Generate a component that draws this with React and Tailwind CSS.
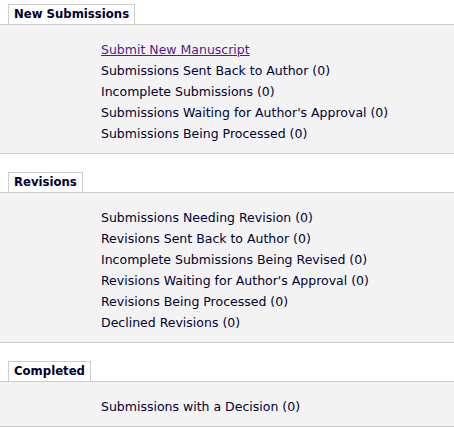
import React from "react";

const sections = [
  {
    title: "New Submissions",
    items: [
      { text: "Submit New Manuscript", link: true },
      { text: "Submissions Sent Back to Author (0)" },
      { text: "Incomplete Submissions (0)" },
      { text: "Submissions Waiting for Author's Approval (0)" },
      { text: "Submissions Being Processed (0)" },
    ],
  },
  {
    title: "Revisions",
    items: [
      { text: "Submissions Needing Revision (0)" },
      { text: "Revisions Sent Back to Author (0)" },
      { text: "Incomplete Submissions Being Revised (0)" },
      { text: "Revisions Waiting for Author's Approval (0)" },
      { text: "Revisions Being Processed (0)" },
      { text: "Declined Revisions (0)" },
    ],
  },
  {
    title: "Completed",
    items: [{ text: "Submissions with a Decision (0)" }],
  },
];

function Section({ title, items }) {
  return (
    <div className="flex flex-col">
      <div className="flex pl-2">
        <div className="h-[21px] border border-[#cccccc] bg-white px-[5px] text-[11.7px] font-bold leading-[18px] text-[#000033]">
          {title}
        </div>
      </div>
      <div className="-mt-px border-y border-[#cccccc] bg-[#f3f3f3] pb-[9px] pl-[101px] pt-[14px] text-[12.5px]">
        {items.map((it) =>
          it.link ? (
            <div key={it.text} className="h-[21px] leading-[21px]">
              <a href="#" className="text-[#551a8b] underline">
                {it.text}
              </a>
            </div>
          ) : (
            <div key={it.text} className="h-[21px] leading-[21px] text-[#000033]">
              {it.text}
            </div>
          )
        )}
      </div>
    </div>
  );
}

export default function App() {
  return (
    <div
      className="flex h-[428px] w-[454px] flex-col gap-[18px] overflow-hidden bg-white pt-[4px]"
      style={{ fontFamily: '"DejaVu Sans", Verdana, sans-serif' }}
    >
      {sections.map((s) => (
        <Section key={s.title} {...s} />
      ))}
    </div>
  );
}
